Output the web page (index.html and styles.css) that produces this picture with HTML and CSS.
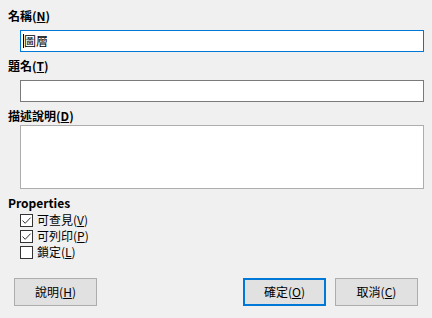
FILE: index.html
```html
<!DOCTYPE html>
<html lang="zh-Hant">
<head>
    <meta charset="UTF-8">
    <title>名稱</title>
    <link rel="stylesheet" href="styles.css">
</head>
<body>
    <div class="dlg">
        <div class="lbl">名稱(<u>N</u>)</div>
        <div class="field focus"><span class="caret"></span>圖層</div>
        <div class="lbl">題名(<u>T</u>)</div>
        <div class="field"></div>
        <div class="lbl">描述說明(<u>D</u>)</div>
        <div class="area"></div>
        <div class="lbl props">Properties</div>
        <ul class="checks">
            <li><span class="box"><svg width="11" height="11" viewBox="0 0 11 11"><path d="M1.5 5.5 L4.2 8.3 L9.6 2.6" fill="none" stroke="#333" stroke-width="1"/></svg></span><span>可查見(<u>V</u>)</span></li>
            <li><span class="box"><svg width="11" height="11" viewBox="0 0 11 11"><path d="M1.5 5.5 L4.2 8.3 L9.6 2.6" fill="none" stroke="#333" stroke-width="1"/></svg></span><span>可列印(<u>P</u>)</span></li>
            <li><span class="box"></span><span>鎖定(<u>L</u>)</span></li>
        </ul>
        <div class="btns">
            <a href="javascript:;" class="btn">說明(<u>H</u>)</a>
            <span class="grow"></span>
            <a href="javascript:;" class="btn def">確定(<u>O</u>)</a>
            <a href="javascript:;" class="btn">取消(<u>C</u>)</a>
        </div>
    </div>
</body>
</html>
```

FILE: styles.css
```css
*{padding:0;margin:0;box-sizing:border-box}
li{list-style:none}
a{text-decoration:none;color:inherit}
html,body{
    width:432px;
    height:318px;
    overflow:hidden;
    background:#f0f0f0;
}
body{
    font-family:"Noto Sans CJK TC","Liberation Sans",sans-serif;
    font-size:12px;
    color:#000;
}
.dlg{
    display:flex;
    flex-direction:column;
    padding:7px 8px 0 8px;
}
.lbl{
    font-weight:bold;
    line-height:17px;
    height:17px;
}
.field{
    margin:6px 0 5px 12px;
    height:22px;
    background:#fff;
    border:1px solid #7a7a7a;
    line-height:20px;
    padding-left:3px;
    position:relative;
}
.field.focus{
    border-color:#0078d7;
}
.caret{
    position:absolute;
    left:2px;
    top:3px;
    width:1px;
    height:14px;
    background:#000;
}
.area{
    margin:1px 0 5px 12px;
    height:64px;
    background:#fff;
    border:1px solid #adadad;
}
.props{
    margin-top:1px;
    line-height:15px;
    height:15px;
}
.checks{
    display:flex;
    flex-direction:column;
    gap:2px;
    margin-top:3px;
    padding-left:12px;
}
.checks li{
    display:flex;
    align-items:center;
    gap:4px;
    height:14px;
    line-height:14px;
}
.box{
    width:13px;
    height:13px;
    border:1px solid #333;
    background:#fff;
    display:flex;
    align-items:center;
    justify-content:center;
}
.btns{
    display:flex;
    gap:9px;
    margin-top:19px;
    padding:0 6px 0 6px;
}
.grow{
    flex:1;
}
.btn{
    width:83px;
    height:28px;
    line-height:26px;
    text-align:center;
    background:#e1e1e1;
    border:1px solid #adadad;
}
.btn.def{
    border:2px solid #0078d7;
    line-height:24px;
}
```
